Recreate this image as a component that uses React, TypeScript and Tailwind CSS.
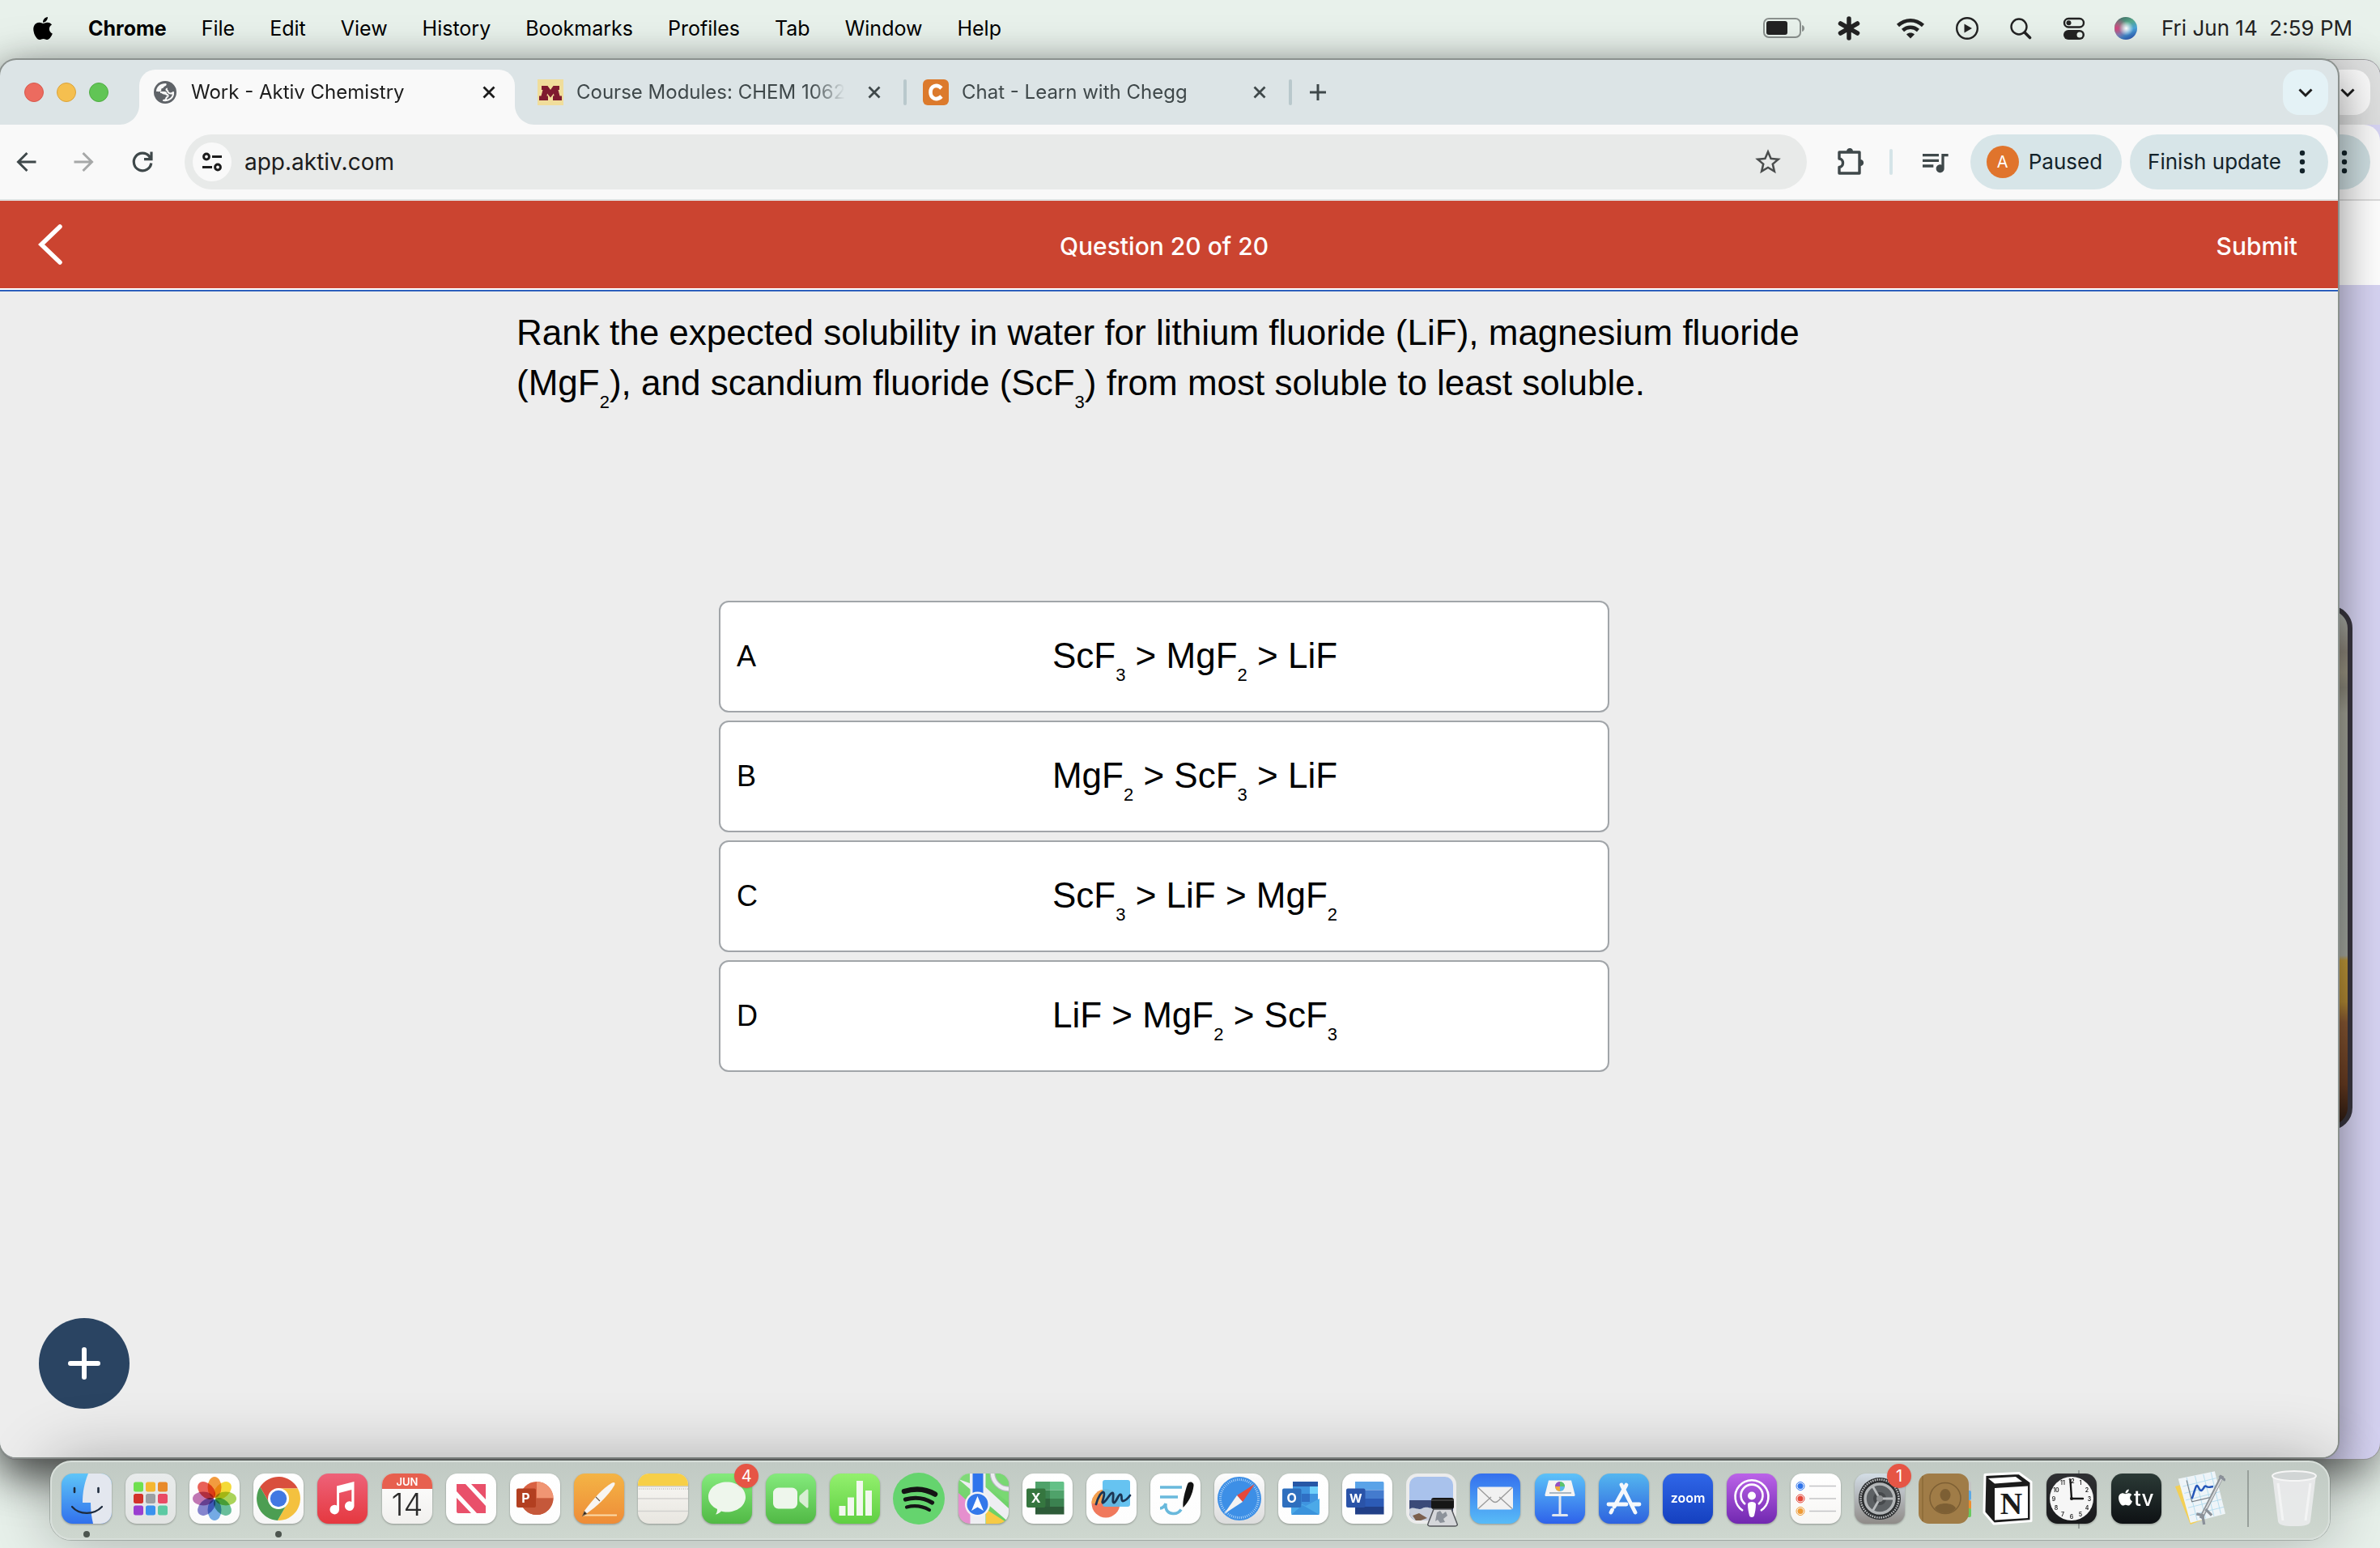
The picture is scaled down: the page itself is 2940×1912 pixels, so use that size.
import type { ReactNode } from 'react'
import { FaApple } from 'react-icons/fa'
import { MdStarBorder, MdQueueMusic } from 'react-icons/md'

const menus = ['File', 'Edit', 'View', 'History', 'Bookmarks', 'Profiles', 'Tab', 'Window', 'Help']

const answers = [
  { key: 'A', parts: ['ScF', '3', ' > MgF', '2', ' > LiF'] },
  { key: 'B', parts: ['MgF', '2', ' > ScF', '3', ' > LiF'] },
  { key: 'C', parts: ['ScF', '3', ' > LiF > MgF', '2'] },
  { key: 'D', parts: ['LiF > MgF', '2', ' > ScF', '3'] },
]

const UI = 'Inter, sans-serif'
const petals = ['#f08a1d', '#f3d414', '#9bcb3c', '#4fb38a', '#5b9be0', '#6f6fc4', '#b55fa6', '#e5453a']

function Sub({ children }: { children: ReactNode }) {
  return <sub className="bottom-auto align-[-16px] text-[22px] leading-none">{children}</sub>
}

/* ---------- menu bar ---------- */

function MenuBar() {
  return (
    <header className="flex h-[72px] items-center justify-between pb-[2px] pl-10 pr-[34px] text-[25px] leading-8 text-black">
      <nav className="flex items-center gap-[43px]">
        <button aria-label="Apple menu" className="w-[26px]"><FaApple className="h-8 w-[26px]" /></button>
        <button className="font-bold">Chrome</button>
        {menus.map((m) => <button key={m}>{m}</button>)}
      </nav>
      <div className="flex items-center text-[#232323]">
        <svg width="52" height="26" viewBox="0 0 52 26" fill="none">
          <rect x="1" y="1" width="45" height="23" rx="6" stroke="#8b918e" strokeWidth="2" />
          <rect x="4" y="4" width="26" height="17" rx="3" fill="#232323" />
          <path d="M48 9c4 1 4 7 0 8z" fill="#8b918e" />
        </svg>
        <svg className="ml-10" width="28" height="30" viewBox="0 0 28 30" stroke="#232323" strokeWidth="5.500" strokeLinecap="round">
          <path d="M14 3v24M3.500 9l21 12M3.500 21l21-12" />
        </svg>
        <svg className="ml-11" width="36" height="28" viewBox="0 0 36 28" fill="none" stroke="#232323" strokeWidth="4.500">
          <path d="M2.500 10.500c9-8.500 22-8.500 31 0M8.500 16.500c5.500-5 13.500-5 19 0" />
          <path d="M13 21.500c3-2.600 7-2.600 10 0L18 26.500z" fill="#232323" stroke="none" />
        </svg>
        <svg className="ml-[38px]" width="28" height="28" viewBox="0 0 28 28" fill="none">
          <circle cx="14" cy="14" r="12.800" stroke="#232323" strokeWidth="2.400" />
          <path d="M10.500 8.500v11l9.500-5.500z" fill="#232323" />
        </svg>
        <svg className="ml-[38px]" width="28" height="28" viewBox="0 0 28 28" fill="none" stroke="#232323">
          <circle cx="12" cy="12" r="9.500" strokeWidth="2.400" />
          <path d="m19 19 6.500 6.500" strokeWidth="3.600" strokeLinecap="round" />
        </svg>
        <svg className="ml-[38px]" width="28" height="28" viewBox="0 0 28 28">
          <rect x="2" y="2" width="24" height="10.500" rx="5.200" fill="none" stroke="#232323" strokeWidth="2.400" />
          <circle cx="7.500" cy="7.300" r="3" fill="#232323" />
          <rect x="1" y="16" width="26" height="12" rx="6" fill="#232323" />
          <circle cx="21" cy="22" r="3.500" fill="#eaf3ed" />
        </svg>
        <svg className="ml-[36px]" width="28" height="28" viewBox="0 0 28 28">
          <defs>
            <linearGradient id="siri" x1="0.200" y1="0" x2="0.600" y2="1">
              <stop offset="0" stopColor="#3f6a63" /><stop offset="0.350" stopColor="#56a98c" /><stop offset="0.650" stopColor="#4aa5d8" /><stop offset="1" stopColor="#2f5bb0" />
            </linearGradient>
            <radialGradient id="siriPink" cx="0.100" cy="0.500" r="0.500"><stop offset="0" stopColor="#d8437f" /><stop offset="1" stopColor="#d8437f" stopOpacity="0" /></radialGradient>
            <radialGradient id="siriGlow" cx="0.520" cy="0.500" r="0.320"><stop offset="0" stopColor="#fff" /><stop offset="1" stopColor="#fff" stopOpacity="0" /></radialGradient>
          </defs>
          <circle cx="14" cy="14" r="14" fill="url(#siri)" />
          <circle cx="14" cy="14" r="14" fill="url(#siriPink)" />
          <circle cx="14" cy="14" r="14" fill="url(#siriGlow)" />
        </svg>
        <time className="ml-[30px] whitespace-pre text-[26px]">Fri Jun 14  2:59 PM</time>
      </div>
    </header>
  )
}

/* ---------- browser chrome ---------- */

const Cross = () => (
  <svg width="16" height="16" viewBox="0 0 16 16" stroke="currentColor" strokeWidth="2.800"><path d="M1.500 1.500l13 13M14.500 1.500l-13 13" /></svg>
)

const Chevron = () => (
  <svg width="20" height="20" viewBox="0 0 20 20" fill="none" stroke="#1c1c1c" strokeWidth="3"><path d="M2.500 6.500 10 14l7.500-7.500" /></svg>
)

const Dots = () => (
  <svg width="8" height="30" viewBox="0 0 8 30" fill="#13232a"><circle cx="4" cy="4" r="3.200" /><circle cx="4" cy="15" r="3.200" /><circle cx="4" cy="26" r="3.200" /></svg>
)

const Globe = () => (
  <svg width="32" height="32" viewBox="0 0 32 32">
    <circle cx="16" cy="16" r="14" fill="#5f6368" />
    <path d="M5 15C5 9 10 5 16.500 5c1.500 0 1.500 2 .5 2.800-1.200 1-2.500.7-2.800 2.200-.2 1.200-2.700.5-3 2-.2 1 .6 2-.4 2.600C9.500 15.500 7 15 5 15z" fill="#f9f9f9" />
    <path d="M10 16h5c2 0 2.500 1.200 2.500 2.800 1.500 0 2.500.7 2 2.200-.4 1-1.800 1-2.100 2.100-.3 1.200.2 2.400-3.400 2.900 7 1 12.500-3.500 12-10-1.500 1.600-4.500 2-6 .3-1-1.300-.3-2.300-2-2.800-1-.5-.5-2 .8-2.100" fill="none" stroke="#f9f9f9" strokeWidth="2" strokeLinejoin="round" />
    <path d="M10 16h5c2 0 2.500 1.200 2.500 2.800-3 0-5.500-.8-7.500-2.800z" fill="#f9f9f9" />
  </svg>
)

const Minnesota = () => (
  <svg width="32" height="32" viewBox="0 0 32 32">
    <rect width="32" height="32" fill="#f0dd9b" />
    <path d="M5 8h7.500l3.500 5 3.500-5H27v5h-1.500l2 7.500H30V26H19v-5.500h1.500l-.5-3-4 5-4-5-.5 3H13V26H2v-5.500h2.500l2-7.500H5z" fill="#7f1a2f" />
  </svg>
)

const Chegg = () => (
  <svg width="32" height="32" viewBox="0 0 32 32">
    <rect width="32" height="32" rx="6" fill="#dc7a2c" />
    <path d="M23 11c-6-6-13.500-2.500-13.500 5s7.500 11 13.500 5" fill="none" stroke="#fff" strokeWidth="4.600" />
  </svg>
)

const tabs = [
  { title: 'Work - Aktiv Chemistry', icon: <Globe />, active: true },
  { title: 'Course Modules: CHEM 1062', icon: <Minnesota /> },
  { title: 'Chat - Learn with Chegg', icon: <Chegg /> },
]

function TabStrip() {
  return (
    <div className="flex h-20 pt-3 text-[24px] leading-8 text-[#3f484a]">
      <div className="flex h-14 w-[172px] shrink-0 items-center gap-4 pl-[30px]">
        <button aria-label="Close" className="size-6 rounded-full border border-[#d8584c] bg-[#ec6b5f]" />
        <button aria-label="Minimize" className="size-6 rounded-full border border-[#dba33a] bg-[#f5bf4f]" />
        <button aria-label="Zoom" className="size-6 rounded-full border border-[#4fad42] bg-[#61c555]" />
      </div>
      {tabs.map((t) => (
        <div key={t.title} className="flex">
          <div className={t.active ? 'relative h-[68px] w-[464px] rounded-t-[20px] bg-[#f9f9f9] text-[#1c1c1c]' : 'h-[68px] w-[464px]'}>
            {t.active && (
              <>
                <svg className="absolute -left-6 bottom-0" width="24" height="24" viewBox="0 0 24 24"><path d="M24 0v24H0C13 24 24 13 24 0z" fill="#f9f9f9" /></svg>
                <svg className="absolute -right-6 bottom-0" width="24" height="24" viewBox="0 0 24 24"><path d="M0 0v24h24C11 24 0 13 0 0z" fill="#f9f9f9" /></svg>
              </>
            )}
            <div className="flex h-14 items-center pl-4 pr-6">
              {t.icon}
              <button className="ml-4 min-w-0 flex-1 overflow-hidden whitespace-nowrap text-left [mask-image:linear-gradient(to_right,#000_290px,transparent_332px)]">{t.title}</button>
              <button aria-label="Close tab" className="ml-7"><Cross /></button>
            </div>
          </div>
          <div className="flex h-14 w-3 items-center justify-center">{!t.active && <span className="h-8 w-1 rounded-full bg-[#b9c8cc]" />}</div>
        </div>
      ))}
      <button aria-label="New tab" className="flex h-14 w-14 items-center justify-center">
        <svg width="20" height="20" viewBox="0 0 20 20" stroke="#3f484a" strokeWidth="3"><path d="M10 0v20M0 10h20" /></svg>
      </button>
      <button aria-label="Search tabs" className="ml-auto mr-3 flex h-14 w-14 items-center justify-center rounded-[20px] bg-[#e4f2f6]"><Chevron /></button>
    </div>
  )
}

function Toolbar() {
  return (
    <div className="flex h-[94px] items-center rounded-tr-[20px] border-b-2 border-[#dfe1e1] bg-[#f9f9f9] pl-4 pr-3 text-[26px] leading-8 text-[#13232a]">
      <div className="flex gap-10">
        <button aria-label="Back"><svg width="32" height="32" viewBox="0 0 32 32" fill="none" stroke="#3f484a" strokeWidth="3"><path d="M28.500 16H6.500M17.500 5 6.500 16l11 11" /></svg></button>
        <button aria-label="Forward"><svg width="32" height="32" viewBox="0 0 32 32" fill="none" stroke="#a6a8a8" strokeWidth="3"><path d="M3.500 16h22M14.500 5l11 11-11 11" /></svg></button>
        <button aria-label="Reload"><svg width="32" height="32" viewBox="0 0 32 32" fill="none" stroke="#3f484a" strokeWidth="3.200"><path d="M26.800 17.500A10.800 10.800 0 1 1 24.500 9.200M27 3.500v9.200H18M24 9l3 3.500" /></svg></button>
      </div>
      <div className="ml-9 flex h-[68px] flex-1 items-center rounded-full bg-[#e8eae9] pl-[10px] pr-[29px]">
        <button aria-label="Site information" className="flex size-12 items-center justify-center rounded-full bg-[#f9f9f9]">
          <svg width="26" height="24" viewBox="0 0 26 24" fill="none" stroke="#1c1c1c" strokeWidth="3">
            <circle cx="6" cy="5.500" r="3.400" /><path d="M13 5.500h12M1 18.500h12" /><circle cx="20" cy="18.500" r="3.400" />
          </svg>
        </button>
        <input aria-label="Address" defaultValue="app.aktiv.com" className="ml-4 min-w-0 flex-1 bg-transparent text-[28px] text-[#1c1c1c] outline-none" />
        <button aria-label="Bookmark"><MdStarBorder className="size-[38px] text-[#4a4d4d]" /></button>
      </div>
      <button aria-label="Extensions" className="ml-9">
        <svg width="36" height="36" viewBox="0 0 36 36" fill="none" stroke="#3f484a" strokeWidth="3.400" strokeLinejoin="round">
          <path d="M4 6h25v26H4v-7.500c6-.5 6-10 0-10.500z" />
          <path d="M13 5c0-5.500 8-5.500 8 0zM30 15c5.500 0 5.500 8 0 8z" fill="#3f484a" stroke="none" />
        </svg>
      </button>
      <span className="ml-[30px] h-8 w-1 rounded-full bg-[#d5e4e8]" />
      <button aria-label="Media controls" className="ml-8"><MdQueueMusic className="size-10 text-[#3f484a]" /></button>
      <button className="ml-6 flex h-[68px] items-center gap-3 rounded-full bg-[#d7e5e8] px-5">
        <span className="flex size-10 items-center justify-center rounded-full bg-[#e0742c] text-[20px] text-white">A</span>
        <span className="pr-1">Paused</span>
      </button>
      <button className="ml-[10px] flex h-[68px] items-center gap-[22px] rounded-full bg-[#d7e5e8] pl-[22px] pr-7">
        Finish update
        <Dots />
      </button>
    </div>
  )
}

/* ---------- page in the browser ---------- */

function Quiz() {
  return (
    <>
      <div className="grid h-[108px] grid-cols-[1fr_auto_1fr] items-center bg-[#cb4430] pl-[38px] pr-[50px] text-[30px] font-medium leading-10 text-white">
        <button aria-label="Previous">
          <svg width="42" height="52" viewBox="-6 0 42 52" fill="none" stroke="#fff" strokeWidth="5.500" strokeLinecap="round"><path d="M30 4 7 26l23 22" /></svg>
        </button>
        <h1 className="pt-1">Question 20 of 20</h1>
        <button className="justify-self-end pt-1">Submit</button>
      </div>
      <div className="h-1 border-b-2 border-[#2c5fbd] bg-white" />
      <main className="relative flex flex-1 flex-col items-center bg-[#ededed] pr-3 pt-5 font-['Liberation_Sans',sans-serif] text-[44px] text-black">
        <p className="w-full max-w-[1600px] leading-[62px]">
          Rank the expected solubility in water for lithium fluoride (LiF), magnesium fluoride (MgF<Sub>2</Sub>), and scandium fluoride (ScF<Sub>3</Sub>) from most soluble to least soluble.
        </p>
        <div className="mt-[234px] flex w-full max-w-[1100px] flex-col gap-[10px]">
          {answers.map((a) => (
            <button key={a.key} className="flex h-[138px] items-center rounded-[12px] border-2 border-[#a1a5a9] bg-white">
              <span className="w-[76px] pl-5 text-left text-[36px]">{a.key}</span>
              <span className="flex-1 whitespace-pre text-center">
                {a.parts.map((p, i) => (i % 2 ? <Sub key={i}>{p}</Sub> : p))}
              </span>
            </button>
          ))}
        </div>
        <button aria-label="Add" className="absolute bottom-[60px] left-12 flex size-28 items-center justify-center rounded-full bg-[#2a4462]">
          <svg width="40" height="40" viewBox="0 0 40 40" stroke="#fff" strokeWidth="6" strokeLinecap="round"><path d="M20 3v34M3 20h34" /></svg>
        </button>
      </main>
    </>
  )
}

// the second Chrome window, only its right edge shows
function BackWindow() {
  return (
    <div className="absolute inset-x-0 -bottom-[2px] top-0 flex flex-col overflow-hidden rounded-[20px] bg-[#d7d4f3] shadow-[0_0_0_1px_#9a9a9a,0_20px_50px_rgba(0,0,0,0.45)]">
      <div className="flex h-20 justify-end bg-[#dedfdf] pr-3 pt-3">
        <div className="flex h-14 w-14 items-center justify-center rounded-[20px] bg-[#fafafa]"><Chevron /></div>
      </div>
      <div className="flex h-[94px] items-center justify-end rounded-tr-[20px] border-b-2 border-[#dcdcdc] bg-[#f9f9f9] pr-3">
        <div className="flex h-[68px] w-[246px] items-center justify-end rounded-full bg-[#cddde0] pr-7"><Dots /></div>
      </div>
      <div className="h-[104px] bg-white" />
      <div className="flex justify-end pr-[34px] pt-[396px]">
        <div className="h-[648px] w-60 rounded-[28px] border-[6px] border-[#3a3740] bg-[linear-gradient(to_bottom,#aeb3ae,#8e877b_8%,#9c9684_12%,#8d8a7c_15%,#a5a598_20%,#a2a8a2_55%,#a8aba2_67%,#c39b3a_68%,#b58c35_76%,#8b5a34_80%,#6a3d22_92%,#2a1a12)]" />
      </div>
      <div className="mt-auto mr-[160px] h-1 w-[284px] self-end bg-[#a5581a]" />
    </div>
  )
}

/* ---------- dock ---------- */

function Tile({ id, from, to, children }: { id: string; from: string; to: string; children?: ReactNode }) {
  return (
    <svg width="62" height="62" viewBox="0 0 62 62" className="relative overflow-visible drop-shadow-[0_1px_1px_rgba(0,0,0,0.3)]">
      <defs>
        <linearGradient id={id} x1="0" y1="0" x2="0" y2="1"><stop offset="0" stopColor={from} /><stop offset="1" stopColor={to} /></linearGradient>
        <clipPath id={id + 'Clip'}><rect width="62" height="62" rx="14" /></clipPath>
      </defs>
      <rect width="62" height="62" rx="14" fill={`url(#${id})`} />
      <g clipPath={`url(#${id}Clip)`}>{children}</g>
    </svg>
  )
}

// red counter over an icon's top right corner
const Badge = ({ n }: { n: string }) => (
  <span className="absolute -right-2 -top-3 flex size-[30px] items-center justify-center rounded-full bg-[#e65545] text-[20px] leading-none text-white shadow">{n}</span>
)

const launchpad = ['#6fe04f', '#f5b731', '#e88a2a', '#d3322a', '#9c9fa3', '#e94b66', '#9a3fd0', '#3a92ee', '#5cc9a3']
const ticks = Array.from({ length: 60 }, (_, i) => i * 6)

const dock: { name: string; icon: ReactNode; badge?: string; running?: boolean; divider?: boolean }[] = [
  {
    name: 'Finder', running: true,
    icon: (
      <Tile id="finder" from="#5ec5f8" to="#3170ec">
        <path d="M33 0C28 12 26 24 26 36h10c0 9 1 18 3 26h23V0z" fill="#e3e7ef" />
        <path d="M16 18v5M45.500 18v5" stroke="#1d2a3c" strokeWidth="2.600" strokeLinecap="round" />
        <path d="M13 41c9 10.500 27 10.500 37 0" fill="none" stroke="#1d2a3c" strokeWidth="2.200" strokeLinecap="round" />
      </Tile>
    ),
  },
  {
    name: 'Launchpad',
    icon: (
      <Tile id="pad" from="#e8ebeb" to="#e2e4e3">
        {launchpad.map((c, i) => <rect key={c} x={10 + (i % 3) * 15} y={10.5 + Math.floor(i / 3) * 14.5} width="12" height="12" rx="2.500" fill={c} />)}
      </Tile>
    ),
  },
  {
    name: 'Photos',
    icon: (
      <Tile id="photos" from="#fff" to="#fbfbfb">
        {petals.map((c, i) => <ellipse key={c} cx="31" cy="17" rx="8.500" ry="13" fill={c} opacity="0.850" transform={`rotate(${i * 45} 31 31)`} className="mix-blend-multiply" />)}
      </Tile>
    ),
  },
  {
    name: 'Chrome', running: true,
    icon: (
      <Tile id="chrome" from="#fff" to="#f6f6f6">
        <path d="M8.200 16.600A27 27 0 0 1 54.900 18.500H31L20.200 37.250z" fill="#d94f3d" />
        <path d="M54.900 18.500A27 27 0 0 1 29.900 57.950L41.800 37.250 31 18.500z" fill="#f4c13f" />
        <path d="M29.900 57.950A27 27 0 0 1 8.200 16.600L20.200 37.250h21.600z" fill="#4c9e52" />
        <circle cx="31" cy="31" r="13" fill="#fff" /><circle cx="31" cy="31" r="10.200" fill="#4278e2" />
      </Tile>
    ),
  },
  {
    name: 'Music',
    icon: (
      <Tile id="music" from="#ee6279" to="#e5383f">
        <path d="M24 15.500 45.500 10v30a5.800 5.800 0 1 1-3.200-5V20L27 24v20.500a5.800 5.800 0 1 1-3-5z" fill="#fff" />
      </Tile>
    ),
  },
  {
    name: 'Calendar',
    icon: (
      <Tile id="cal" from="#fff" to="#f1f0ee">
        <rect width="62" height="19" fill="#e7604f" />
        <text x="31" y="15" textAnchor="middle" fontFamily={UI} fontSize="13" fontWeight="600" fill="#fff">JUN</text>
        <text x="31" y="52" textAnchor="middle" fontFamily={UI} fontSize="38" fontWeight="300" fill="#2b2b2b">14</text>
      </Tile>
    ),
  },
  {
    name: 'News',
    icon: (
      <Tile id="news" from="#fff" to="#fdfdfd">
        <path d="M13 13h11l25 27v9H38L13 22z" fill="#e9506a" />
        <path d="M31 13h18v19zM13 30l18 19H15a2 2 0 0 1-2-2z" fill="#e9506a" />
      </Tile>
    ),
  },
  {
    name: 'PowerPoint',
    icon: (
      <Tile id="ppt" from="#fff" to="#fdfdfd">
        <circle cx="33" cy="30.500" r="20.500" fill="#d96243" /><path d="M33 10a20.500 20.500 0 0 1 20.500 20.500H33z" fill="#f09573" /><path d="M12.500 30.500h41a20.500 20.500 0 0 1-41 0z" fill="#c5583a" />
        <rect x="8" y="18.500" width="24" height="23.500" rx="2" fill="#b23f20" />
        <text x="19.500" y="36" textAnchor="middle" fontFamily={UI} fontSize="16" fontWeight="700" fill="#fff">P</text>
      </Tile>
    ),
  },
  {
    name: 'Pages',
    icon: (
      <Tile id="pages" from="#f4b445" to="#ee8c38">
        <path d="M11 51.500h42" stroke="#fbd9a8" strokeWidth="2" />
        <path d="M11 52l2-6C24 31 36 18 47 11.500c3-1.500 4.500 0 3 3C43 27 28 41 15.500 49.500z" fill="#f8f5f1" />
        <path d="m27 29 5 5M11 52l2-5 2.500 2.500z" stroke="#6d5a45" strokeWidth="1.200" />
      </Tile>
    ),
  },
  {
    name: 'Notes',
    icon: (
      <Tile id="notes" from="#faf9f6" to="#e8e6e0">
        <rect width="62" height="16" fill="#f7cf47" />
        <path d="M0 16h62M0 31h62M0 46.500h62" stroke="#d2d1cf" strokeWidth="1.500" /><path d="M1 19h61" stroke="#c0bfbc" strokeWidth="1.500" strokeDasharray="1 1.500" />
      </Tile>
    ),
  },
  {
    name: 'Messages', badge: '4',
    icon: (
      <Tile id="msg" from="#84ea7c" to="#51b945">
        <path d="M31 10.500c13 0 23 8 23 18.500S44 47.500 31 47.500c-3 0-5-.3-7-1-2 2-4 3.500-7 4 1.500-2 2-4 2-6.500-6-3-11-8-11-15 0-10.500 10-18.500 23-18.500z" fill="#eef6ec" />
      </Tile>
    ),
  },
  {
    name: 'FaceTime',
    icon: (
      <Tile id="facetime" from="#84ea7c" to="#51b945">
        <rect x="9" y="17.500" width="30" height="26" rx="6.500" fill="#eef6ec" /><path d="m42 27 8-7c1-1 2.500-.5 2.500 1v20c0 1.500-1.500 2-2.500 1l-8-7c-1-1-1-7 0-8z" fill="#d7eed3" />
      </Tile>
    ),
  },
  {
    name: 'Numbers',
    icon: (
      <Tile id="numbers" from="#93f06e" to="#5fcf42">
        <path d="M15.500 40v12M26 29.500V52M37 9v43M48 21v31" stroke="#f2f8ef" strokeWidth="8" />
      </Tile>
    ),
  },
  {
    name: 'Spotify',
    icon: (
      <svg width="62" height="62" viewBox="0 0 62 62" className="overflow-visible">
        <circle cx="31" cy="31" r="32" fill="#65d46e" />
        <g fill="none" stroke="#141414" strokeLinecap="round"><path d="M13 22c13-4 27-3 38 3.500" strokeWidth="6.500" /><path d="M14.500 32c11-3 23-2 33 4" strokeWidth="5.200" /><path d="M16 41.500c10-2.500 19-1.500 28 3.500" strokeWidth="4.200" /></g>
      </svg>
    ),
  },
  {
    name: 'Maps',
    icon: (
      <Tile id="maps" from="#7fd978" to="#67cf62">
        <path d="M0 24l22 20v18H0z" fill="#e58fce" /><path d="M34 62V44l28 18z" fill="#f6ca45" />
        <path d="M0 7l62 53V43L15 0H0z" fill="#eeeef2" /><path d="M0 0h14v12L0 7z" fill="#7fd978" /><path d="M34 0h28v36L34 14z" fill="#79d873" />
        <path d="M24-2v66" stroke="#eeeef2" strokeWidth="19" /><path d="M24-2v30" stroke="#2f74ec" strokeWidth="13" />
        <circle cx="62" cy="-1" r="20" fill="none" stroke="#b7b7c0" strokeWidth="7" /><circle cx="62" cy="-1" r="20" fill="none" stroke="#ececf0" strokeWidth="4.500" />
        <circle cx="23.500" cy="38" r="15.500" fill="#f3f3f5" /><circle cx="23.500" cy="38" r="13" fill="#3378ea" /><path d="m23.500 28 7.500 18-7.500-4.500L16 46z" fill="#fff" />
      </Tile>
    ),
  },
  {
    name: 'Excel',
    icon: (
      <Tile id="excel" from="#fff" to="#fdfdfd">
        <path d="M16 10h18v10.500H16z" fill="#4fa26a" /><path d="M34 10h16a1.500 1.500 0 0 1 1.500 1.500v9H34z" fill="#63c187" /><path d="M16 20.500h18V31H16z" fill="#3b8250" /><path d="M34 20.500h17.500V31H34z" fill="#4fa26a" />
        <path d="M16 31h18v10H16z" fill="#2f633c" /><path d="M34 31h17.500v10H34z" fill="#3b8250" /><path d="M16 41h35.500v9.500H16z" fill="#2d5b38" />
        <rect x="5" y="18.500" width="23.500" height="23.500" rx="2" fill="#35763f" />
        <text x="16.700" y="36" textAnchor="middle" fontFamily={UI} fontSize="16" fontWeight="700" fill="#fff">X</text>
      </Tile>
    ),
  },
  {
    name: 'Freeform',
    icon: (
      <Tile id="freeform" from="#fff" to="#fdfdfd">
        <circle cx="24" cy="37" r="17.500" fill="#f0795c" /><path d="M24 19.500A17.500 17.500 0 0 0 6.500 37h35A17.500 17.500 0 0 0 24 19.500z" fill="#f3a04e" />
        <rect x="20" y="8" width="34" height="33" rx="3" fill="#55bdf0" opacity="0.900" />
        <path d="M12 38c2-8 7-17 9.500-14.500S17 38 21 36s8-12 11-12-1 12 2 12 5-10 8-10 0 8 3 8 6-3 9-7" fill="none" stroke="#1b3554" strokeWidth="2.800" strokeLinecap="round" />
      </Tile>
    ),
  },
  {
    name: 'Freenotes',
    icon: (
      <Tile id="freenotes" from="#fff" to="#fdfdfd">
        <path d="M12 17h27M12 29h22M12 43c3 0 6-3 7-6-1 9 4 13 10 12.500 4 0 7-2 9-5" fill="none" stroke="#69b9dc" strokeWidth="3.600" />
        <path d="M46 13c1.500-4 8-3 7.500 2-1 10-6 20-13 27-1-8 2-19 5.500-29z" fill="#111" />
      </Tile>
    ),
  },
  {
    name: 'Safari',
    icon: (
      <Tile id="safari" from="#fdfdfd" to="#dcdcdc">
        <circle cx="31" cy="31" r="27" fill="#3d8fe6" />
        {ticks.map((a) => <path key={a} d="M31 6v3" stroke="#cfe6fa" strokeWidth="0.700" transform={`rotate(${a} 31 31)`} />)}
        <path d="m50 13-22 14 7 8z" fill="#e5493b" /><path d="M12 50l16-23 7 8z" fill="#f3f3f3" />
      </Tile>
    ),
  },
  {
    name: 'Outlook',
    icon: (
      <Tile id="outlook" from="#fff" to="#fdfdfd">
        <rect x="18" y="10" width="31" height="30" fill="#3f94df" /><path d="M18 10h31v6H18z" fill="#2657a6" /><path d="M39 16h10v9H39z" fill="#6fd0fb" /><path d="M29 25h10v10H29z" fill="#2f6fc4" />
        <path d="M16 31l18 9 17-9v18a2 2 0 0 1-2 2H18a2 2 0 0 1-2-2z" fill="#4ba9e8" /><path d="M51 51 30 39l-14 12z" fill="#3b93dc" />
        <rect x="5" y="18.500" width="23.500" height="23.500" rx="2" fill="#2e6fbe" />
        <text x="16.700" y="36" textAnchor="middle" fontFamily={UI} fontSize="16" fontWeight="700" fill="#fff">O</text>
      </Tile>
    ),
  },
  {
    name: 'Word',
    icon: (
      <Tile id="word" from="#fff" to="#fdfdfd">
        <path d="M16 10h34a1.500 1.500 0 0 1 1.500 1.500V20.500H16z" fill="#5aa3e8" /><path d="M16 20.500h35.500V31H16z" fill="#447bce" /><path d="M16 31h35.500v10H16z" fill="#2c5bb6" /><path d="M16 41h35.500v9.500H16z" fill="#213f87" />
        <rect x="5" y="18.500" width="23.500" height="23.500" rx="2" fill="#2a53a8" />
        <text x="16.700" y="36" textAnchor="middle" fontFamily={UI} fontSize="15" fontWeight="700" fill="#fff">W</text>
      </Tile>
    ),
  },
  {
    name: 'Preview',
    icon: (
      <svg width="62" height="62" viewBox="0 0 62 62" className="overflow-visible">
        <rect width="62" height="62" rx="14" fill="#ececec" /><rect x="4" y="4" width="54" height="54" rx="10" fill="#a9c2ec" />
        <path d="M4 33h54v15a10 10 0 0 1-10 10H14A10 10 0 0 1 4 48z" fill="#3b4a78" /><path d="M4 44c6-4 10 2 16-1s10 1 14-1l-4 16H14C8 58 4 53 4 48z" fill="#c9cfdb" /><path d="M8 52l8-3 10 6-8 3h-6z" fill="#7b5f4d" />
        <rect x="31" y="30" width="28" height="14" rx="3" fill="#161616" /><path d="M31 33h28" stroke="#5a5a5a" />
        <path d="M34 44h22l7 18c1 2-1 3-3 3H30c-2 0-4-1-3-3z" fill="#d5d7da" stroke="#54565a" strokeWidth="1.500" /><path d="m38 48 4-2 3 4 4-3 2 5-5 4 2 4-6 1-3-4-3 2z" fill="#8d939b" />
      </svg>
    ),
  },
  {
    name: 'Mail',
    icon: (
      <Tile id="mail" from="#3470ee" to="#58bbf7">
        <rect x="9" y="16.500" width="44" height="28" rx="3" fill="#f1f1f1" />
        <path d="M10 43.500 26 29M52 43.500 36 29M10 17.500l17 16c2.500 2.500 5.500 2.500 8 0l17-16" fill="none" stroke="#9a9a9a" strokeWidth="1.300" />
      </Tile>
    ),
  },
  {
    name: 'Keynote',
    icon: (
      <Tile id="keynote" from="#5cc2f8" to="#2e62ea">
        <path d="M31 28v24" stroke="#dfe6ee" strokeWidth="3" /><rect x="21" y="50" width="20" height="3" rx="1.500" fill="#dfe6ee" />
        <path d="M17 8.500h28l4.500 17.500a1.500 1.500 0 0 1-1.500 2H14a1.500 1.500 0 0 1-1.500-2z" fill="#f4f4f4" /><path d="M18 24h27" stroke="#8fa3b5" strokeWidth="1.500" />
        <circle cx="31" cy="16" r="6" fill="#5cb8e8" /><path d="M31 16v-6a6 6 0 0 1 6 6z" fill="#5cc36a" /><path d="M31 16v-6a6 6 0 0 0-6 6z" fill="#9b4fc0" /><path d="M31 16h-6a6 6 0 0 0 6 6z" fill="#f0a83a" />
      </Tile>
    ),
  },
  {
    name: 'App Store',
    icon: (
      <Tile id="appstore" from="#54b6ef" to="#2e62df">
        <path d="M28 14 45 48M34 14 19 41M16.500 45l-1.500 3M12 38h22M42 38h8" stroke="#f5f8fc" strokeWidth="4.800" strokeLinecap="round" />
      </Tile>
    ),
  },
  {
    name: 'Zoom',
    icon: (
      <Tile id="zoom" from="#2f66e8" to="#1540bf">
        <text x="31" y="36" textAnchor="middle" fontFamily={UI} fontSize="16" fontWeight="600" fill="#fff">zoom</text>
      </Tile>
    ),
  },
  {
    name: 'Podcasts',
    icon: (
      <Tile id="podcasts" from="#bb63e8" to="#7128b0">
        <g fill="none" stroke="#fff" strokeWidth="2.600"><path d="M20 46a20.500 20.500 0 1 1 22 0" /><path d="M23 38a13.500 13.500 0 1 1 16 0" /></g>
        <circle cx="31" cy="27.500" r="5" fill="#fff" /><path d="M26 38c0-4 10-4 10 0 0 5-1 10-2 14-.6 2.500-5.400 2.500-6 0-1-4-2-9-2-14z" fill="#fff" />
      </Tile>
    ),
  },
  {
    name: 'Reminders',
    icon: (
      <Tile id="reminders" from="#fff" to="#f7f6f4">
        {['#2f74ea', '#e5483a', '#ef9a34'].map((c, i) => (
          <g key={c}><circle cx="12" cy={15.5 + i * 15.5} r="5" fill="none" stroke={c} /><circle cx="12" cy={15.5 + i * 15.5} r="3.500" fill={c} /><path d={`M23 ${15.5 + i * 15.5}h33`} stroke="#c4c4c6" strokeWidth="1.300" /></g>
        ))}
      </Tile>
    ),
  },
  {
    name: 'Settings', badge: '1',
    icon: (
      <Tile id="settings" from="#d3dde6" to="#8f8b88">
        <circle cx="31" cy="31" r="26" fill="#2c2e30" /><circle cx="31" cy="31" r="23.500" fill="none" stroke="#b9bbbd" strokeWidth="2.500" strokeDasharray="1.600 1.200" />
        <circle cx="31" cy="31" r="18" fill="#5d6164" stroke="#b3b6b8" strokeWidth="3.500" /><circle cx="31" cy="31" r="8" fill="#46494c" />
        <path d="M31 31h17M31 31l-8.500 15M31 31l-8.500-15" stroke="#b9bcbe" strokeWidth="2.800" /><circle cx="31" cy="31" r="4" fill="#8f9294" />
      </Tile>
    ),
  },
  {
    name: 'Contacts',
    icon: (
      <svg width="62" height="62" viewBox="0 0 62 62" className="overflow-visible">
        <rect x="50" y="10" width="15" height="14" rx="2" fill="#c4c4c4" /><rect x="50" y="21" width="15" height="12" rx="2" fill="#5ba9e6" /><rect x="50" y="33" width="15" height="12" rx="2" fill="#ee8d2d" /><rect x="50" y="43" width="15" height="11" rx="2" fill="#69c95e" />
        <rect width="62" height="62" rx="13" fill="#a07c47" /><path d="M5 3v56" stroke="#80602f" />
        <circle cx="33" cy="30.500" r="19" fill="none" stroke="#7d5f34" strokeWidth="1.500" /><ellipse cx="33" cy="26.500" rx="6.500" ry="7.500" fill="#7d5f34" /><path d="M20 43c3-8 23-8 26 0-7 8-19 8-26 0z" fill="#7d5f34" />
      </svg>
    ),
  },
  {
    name: 'Notion',
    icon: (
      <svg width="62" height="62" viewBox="0 0 62 62" className="overflow-visible">
        <path d="M3 1.500 45-.5l15 11v48L14 62 2 48z" fill="#1b1b1b" stroke="#fff" strokeWidth="3" strokeLinejoin="round" />
        <path d="M7 6l34-2 8 6-34 2.500z" fill="#fff" /><path d="M15 18l41-2.500V55l-41 2.500z" fill="#fff" />
        <text x="35.500" y="50" textAnchor="middle" fontFamily="'Liberation Serif', serif" fontSize="38" fontWeight="700" fill="#1b1b1b">N</text>
      </svg>
    ),
  },
  {
    name: 'Clock', divider: true,
    icon: (
      <Tile id="clock" from="#2f3033" to="#18191b">
        <circle cx="31" cy="31" r="27" fill="#f6f6f6" />
        {Array.from({ length: 12 }, (_, i) => (
          <text key={i} x={31 + 22 * Math.sin(((i + 1) * Math.PI) / 6)} y={33.5 - 22 * Math.cos(((i + 1) * Math.PI) / 6)} textAnchor="middle" fontFamily={UI} fontSize="7" fontWeight="600" fill="#222">{i + 1}</text>
        ))}
        <path d="M31 31 29.500 8M31 31h14" stroke="#151515" strokeWidth="2.400" strokeLinecap="round" /><circle cx="31" cy="31" r="2" fill="#151515" />
      </Tile>
    ),
  },
  {
    name: 'TV',
    icon: (
      <Tile id="tv" from="#2b3a36" to="#0e1114">
        <FaApple x="6" y="18" size={23} color="#fff" />
        <text x="28" y="40" fontFamily={UI} fontSize="26" fontWeight="500" fill="#fff">tv</text>
      </Tile>
    ),
  },
  {
    name: 'Grapher',
    icon: (
      <svg width="66" height="72" viewBox="0 0 66 72">
        <path d="M0 20l14-4 22 48-16 6z" fill="#f3cf55" /><path d="M4 10 52 0l14 56-46 12z" fill="#eef4f8" />
        <path d="M10 20 54 9M12 29l44-11M14 38l45-11M17 48l44-11M19 58l45-11M15 8l14 57M26 6l14 56M37 4l14 55M47 1l13 55" stroke="#b3dcee" strokeWidth="1" />
        <path d="M15 12l7 28 26-6" fill="none" stroke="#7a8088" strokeWidth="1.200" /><path d="M22 36c3-8 5-18 7-17s3 8 6 6 3-7 6-5 4 1 9 0" fill="none" stroke="#2455b8" strokeWidth="2.600" />
        <path d="M62 6 34 62" stroke="#8b8f94" strokeWidth="5" /><path d="M62 8 35 60" stroke="#d5d8da" strokeWidth="2" /><path d="m28 56 8 2 2 12M40 50l8 8M58 6l8 6" fill="none" stroke="#8a9099" strokeWidth="3.500" />
      </svg>
    ),
  },
]

function Dock() {
  return (
    <nav aria-label="Dock" className="relative mx-[62px] mb-[10px] mt-1 flex h-[98px] items-center rounded-[26px] border-2 border-[#d8dfda] bg-[linear-gradient(#c1cac4,#ced7cf)] pb-1 pl-3 pr-[14px] shadow-[0_0_0_1px_rgba(90,100,95,0.35),0_0_80px_rgba(0,0,0,0.3)]">
      <div className="flex min-w-0 flex-1 justify-between">
        {dock.map((d) => (
          <button key={d.name} aria-label={d.name} className="relative flex h-[62px] w-[62px] shrink-0 items-center justify-center">
            {d.divider && <span className="absolute -top-1 right-[21px] h-[72px] w-[2px] bg-[#98a09b]" />}
            {d.icon}
            {d.badge && <Badge n={d.badge} />}
            {d.running && <span className="absolute -bottom-[17px] size-2 rounded-full bg-[#4d554f]" />}
          </button>
        ))}
      </div>
      <span className="ml-[27px] h-[70px] w-[2px] bg-[#98a09b]" />
      <button aria-label="Trash" className="ml-7">
        <svg width="56" height="70" viewBox="0 0 56 70">
          <path d="M1 6h54l-7 57c-1 4-5 6-20 6S9 67 8 63z" fill="#e9eaec" opacity="0.920" />
          <ellipse cx="28" cy="7" rx="27" ry="6" fill="#d1d5d5" stroke="#f6f6f6" strokeWidth="2" /><path d="M8 16l6 46M48 16l-6 46" stroke="#fff" strokeWidth="3" opacity="0.500" />
        </svg>
      </button>
    </nav>
  )
}

export default function App() {
  return (
    <div className="flex min-h-screen flex-col overflow-hidden bg-[#e8f1eb] font-[Inter,sans-serif]">
      <MenuBar />
      <div className="relative mt-[2px] flex flex-1 flex-col">
        <BackWindow />
        <div className="relative mr-[52px] flex flex-1 flex-col overflow-hidden rounded-[20px] bg-[#dce4e6] shadow-[0_0_0_2px_#8b918e,0_16px_60px_rgba(0,0,0,0.5)]">
          <TabStrip />
          <Toolbar />
          <Quiz />
        </div>
      </div>
      <Dock />
    </div>
  )
}
